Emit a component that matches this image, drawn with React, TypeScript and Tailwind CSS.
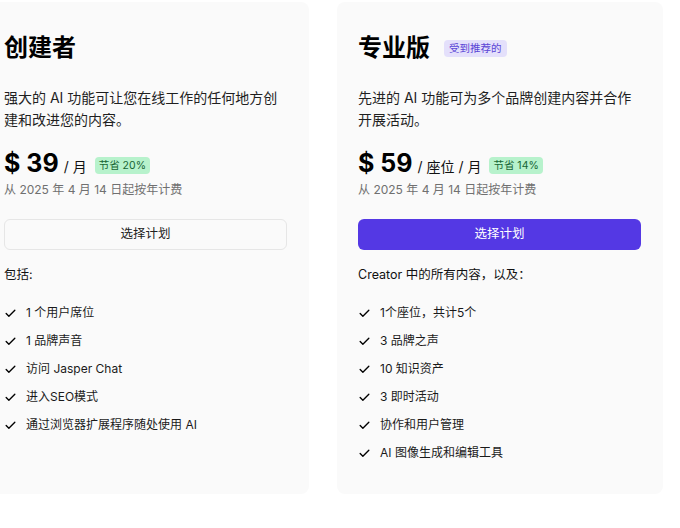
import { Check } from 'lucide-react';

interface Plan {
  name: string;
  tag?: string;
  desc: string;
  price: string;
  unit: string;
  save: string;
  primary: boolean;
  intro: string;
  features: string[];
}

const plans: Plan[] = [
  {
    name: '创建者',
    desc: '强大的 AI 功能可让您在线工作的任何地方创建和改进您的内容。',
    price: '39',
    unit: '/ 月',
    save: '节省 20%',
    primary: false,
    intro: '包括:',
    features: ['1 个用户席位', '1 品牌声音', '访问 Jasper Chat', '进入SEO模式', '通过浏览器扩展程序随处使用 AI'],
  },
  {
    name: '专业版',
    tag: '受到推荐的',
    desc: '先进的 AI 功能可为多个品牌创建内容并合作开展活动。',
    price: '59',
    unit: '/ 座位 / 月',
    save: '节省 14%',
    primary: true,
    intro: 'Creator 中的所有内容，以及：',
    features: ['1个座位，共计5个', '3 品牌之声', '10 知识资产', '3 即时活动', '协作和用户管理', 'AI 图像生成和编辑工具'],
  },
];

function PlanCard({ plan }: { plan: Plan }) {
  return (
    <div className="w-[326px] h-[492px] shrink-0 rounded-lg bg-[#fafafa] pl-[21px] pr-[22px] pt-[30px]">
      <div className="flex items-center gap-[14px] h-[32px]">
        <h2 className="text-[24px] leading-[32px] font-bold text-black">{plan.name}</h2>
        {plan.tag && (
          <span className="rounded bg-[#e4e0fb] px-[5px] text-[10.5px] leading-[17px] text-[#5b45d6]">{plan.tag}</span>
        )}
      </div>
      <p className="mt-[23px] text-[14px] leading-[22px] text-[#1f1f1f]">{plan.desc}</p>
      <div className="mt-[17px] flex items-center h-[30px]">
        <span className="text-[25px] font-bold leading-[30px] text-black">$ {plan.price}</span>
        <span className="ml-[5px] mt-[8px] text-[14px] leading-[18px] text-[#111]">{plan.unit}</span>
        <span className="ml-[8px] mt-[4px] rounded bg-[#b7f2cc] px-[4px] text-[10.5px] leading-[17px] text-[#166534]">
          {plan.save}
        </span>
      </div>
      <div className="mt-[3px] text-[12px] leading-[18px] text-[#707070]">从 2025 年 4 月 14 日起按年计费</div>
      <button
        className={`mt-[20px] w-full h-[31px] rounded-md text-[12.5px] ${
          plan.primary ? 'bg-[#5438e4] text-white' : 'bg-[#fafafa] border border-[#e6e6e6] text-[#222]'
        }`}
      >
        选择计划
      </button>
      <div className="mt-[16px] text-[12.5px] leading-[18px] text-[#111]">{plan.intro}</div>
      <ul className="mt-[19px] flex flex-col gap-[8px]">
        {plan.features.map((f) => (
          <li key={f} className="flex items-center gap-[9px] text-[12px] leading-[20px] text-[#1a1a1a]">
            <Check className="w-[13px] h-[13px] text-black" strokeWidth={2.5} />
            {f}
          </li>
        ))}
      </ul>
    </div>
  );
}

export default function App() {
  return (
    <div
      className="w-[680px] h-[528px] overflow-hidden bg-white"
      style={{ fontFamily: 'Inter, "Noto Sans CJK SC", sans-serif' }}
    >
      <div className="ml-[-17px] mt-[2px] flex gap-[28px]">
        {plans.map((p) => (
          <PlanCard key={p.name} plan={p} />
        ))}
      </div>
    </div>
  );
}
